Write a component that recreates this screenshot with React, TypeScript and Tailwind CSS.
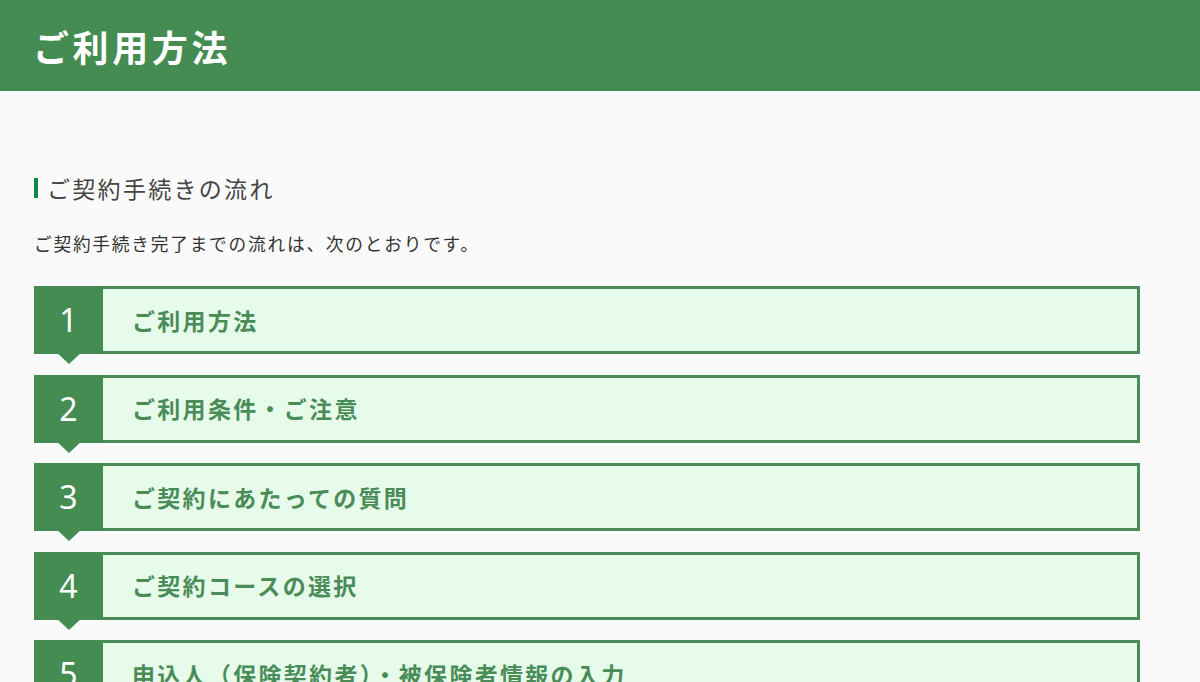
const steps = [
  "ご利用方法",
  "ご利用条件・ご注意",
  "ご契約にあたっての質問",
  "ご契約コースの選択",
  "申込人（保険契約者）・被保険者情報の入力",
];

const jp = "font-['Meiryo','Noto_Sans_CJK_JP','Noto_Sans',sans-serif]";

function Step({ num, label }: { num: number; label: string }) {
  return (
    <div className="relative flex h-[68px] w-[1106px] border-[3px] border-[#4a8c58] bg-[#e6fbea]">
      <div className="-my-[3px] -ml-[3px] flex w-[69px] items-center justify-center bg-[#458c53]">
        <span className="font-['Noto_Sans',sans-serif] text-[32px] leading-none text-white">
          {num}
        </span>
      </div>
      <div
        className={`flex items-center pl-[29px] text-[23px] font-bold tracking-widest text-[#4a8c58] ${jp}`}
      >
        {label}
      </div>
      {/* arrow under the number */}
      <div className="absolute left-[18px] top-full h-0 w-0 border-x-[14px] border-t-[13px] border-x-transparent border-t-[#458c53]" />
    </div>
  );
}

export default function App() {
  return (
    <div className={`h-[682px] w-[1200px] overflow-hidden bg-[#fafafa] ${jp}`}>
      <header className="flex h-[91px] items-center bg-[#458c53] px-[33px]">
        <h1 className="text-[36px] font-bold leading-none tracking-widest text-white">
          ご利用方法
        </h1>
      </header>

      <div className="flex flex-col pl-[34px]">
        <div className="mt-[85px] flex h-[24px] items-center gap-[9px]">
          <span className="h-[20px] w-[4px] bg-[#0f8a4c]" />
          <h2 className="text-[23px] leading-none tracking-widest text-[#444]">
            ご契約手続きの流れ
          </h2>
        </div>
        <p className="mt-[31px] h-[24px] text-[17.7px] leading-[24px] tracking-widest text-[#333]">
          ご契約手続き完了までの流れは、次のとおりです。
        </p>
        <div className="mt-[31px] flex flex-col gap-[20.5px]">
          {steps.map((s, i) => (
            <Step key={s} num={i + 1} label={s} />
          ))}
        </div>
      </div>
    </div>
  );
}
